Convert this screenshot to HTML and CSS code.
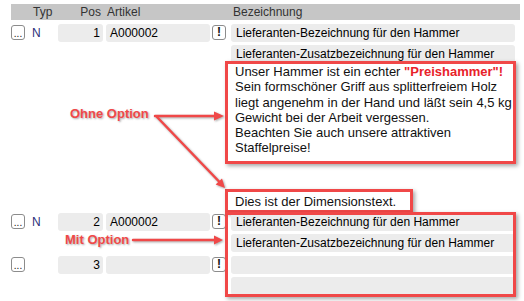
FILE: index.html
```html
<!DOCTYPE html>
<html lang="de">
<head>
    <meta charset="UTF-8">
    <title>Positionen</title>
    <link rel="stylesheet" href="styles.css">
</head>
<body>
    <div class="page">
        <div class="head">
            <span></span>
            <span class="typ">Typ</span>
            <span class="pos">Pos</span>
            <span class="art">Artikel</span>
            <span></span>
            <span class="bez-title">Bezeichnung</span>
        </div>

        <div class="row">
            <div class="btn dots">...</div>
            <div class="typ n">N</div>
            <div class="field num">1</div>
            <div class="field art-field">A000002</div>
            <div class="btn excl">!</div>
            <div class="bez">
                <div class="field">Lieferanten-Bezeichnung für den Hammer</div>
                <div class="field">Lieferanten-Zusatzbezeichnung für den Hammer</div>
                <div class="note">
                    Unser Hammer ist ein echter <b class="hot">"Preishammer"!</b><br>
                    Sein formschöner Griff aus splitterfreiem Holz<br>
                    liegt angenehm in der Hand und läßt sein 4,5 kg<br>
                    Gewicht bei der Arbeit vergessen.<br>
                    Beachten Sie auch unsere attraktiven<br>
                    Staffelpreise!
                </div>
                <div class="dim">Dies ist der Dimensionstext.</div>
            </div>
        </div>

        <div class="marked">
            <div class="row">
                <div class="btn dots">...</div>
                <div class="typ n">N</div>
                <div class="field num">2</div>
                <div class="field art-field">A000002</div>
                <div class="btn excl">!</div>
                <div class="bez">
                    <div class="field">Lieferanten-Bezeichnung für den Hammer</div>
                    <div class="field">Lieferanten-Zusatzbezeichnung für den Hammer</div>
                </div>
            </div>
            <div class="row">
                <div class="btn dots">...</div>
                <div class="typ"></div>
                <div class="field num">3</div>
                <div class="field art-field"></div>
                <div class="btn excl">!</div>
                <div class="bez">
                    <div class="field"></div>
                    <div class="field"></div>
                </div>
            </div>
            <div class="frame"></div>
        </div>
    </div>

    <!-- annotations -->
    <div class="label label-ohne">Ohne Option</div>
    <div class="label label-mit">Mit Option</div>
    <svg class="arrows" width="524" height="301" viewBox="0 0 524 301">
        <g stroke="#f04848" stroke-width="2.5" fill="none" stroke-linecap="round">
            <path d="M155 116 H216"/>
            <path d="M157 117 L219 181.5"/>
            <path d="M133 240 H216"/>
        </g>
        <g fill="#f04848">
            <polygon points="224,116 214,111.5 214,120.5"/>
            <polygon points="225,188 215.6,184.6 222,178.4"/>
            <polygon points="223,240 214,235.5 214,244.5"/>
        </g>
    </svg>
</body>
</html>
```

FILE: styles.css
```css
* {
    margin: 0;
    padding: 0;
    box-sizing: border-box;
}

body {
    position: relative;
    width: 524px;
    height: 301px;
    overflow: hidden;
    background: #fff;
    color: #111;
    font-family: "Liberation Sans", Arial, sans-serif;
    font-size: 12px;
    line-height: 15px;
}

.page {
    padding: 4px 0 0 11px;
}

/* table header */
.head {
    display: grid;
    grid-template-columns: 14px 33px 48px 106px 19px 1fr;
    width: 509px;
    height: 16px;
    margin-bottom: 4px;
    background: #c6c6c6;
    color: #333;
    line-height: 17px;
}

.head .typ {
    padding-left: 8px;
}

.head .pos {
    width: 45px;
    padding-right: 2px;
    text-align: right;
}

.head .art {
    padding-left: 1px;
}

.head .bez-title {
    padding-left: 2px;
}

/* rows */
.row {
    display: grid;
    grid-template-columns: 14px 33px 48px 106px 19px 284px;
    align-items: start;
}

.btn {
    height: 15px;
    margin-top: 1px;
    border: 1px solid #8c8c8c;
    border-radius: 3px;
    background: #fff;
    text-align: center;
    color: #111;
}

.dots {
    font-size: 10px;
    line-height: 15px;
}

.excl {
    width: 14px;
    font-weight: bold;
    font-size: 12px;
    line-height: 13px;
}

.typ.n {
    padding-left: 7px;
    line-height: 18px;
    color: #2c2f7a;
}

.field {
    height: 18px;
    padding: 0 5px;
    background: #ececec;
    border-radius: 3px;
    color: #000;
    line-height: 18px;
    white-space: nowrap;
    overflow: hidden;
}

.num {
    width: 45px;
    padding-right: 3px;
    text-align: right;
}

.art-field {
    width: 104px;
    padding-left: 4px;
}

.bez {
    display: flex;
    flex-direction: column;
    gap: 3px;
}

/* long text, marked red */
.note {
    position: relative;
    height: 103px;
    margin: -5px -1px 0 -6px;
    padding: 0 4px 0 7px;
    border: 3px solid #f04848;
    background: #fff;
    font-size: 13px;
    line-height: 15.3px;
    white-space: nowrap;
    box-shadow: 2px 2px 4px rgba(0, 0, 0, 0.35);
}

.hot {
    color: #e8222a;
}

.dim {
    width: 188px;
    height: 24px;
    margin: 22px 0 0 -6px;
    padding: 2px 7px 0;
    border: 3px solid #f04848;
    background: #fff;
    font-size: 13px;
    white-space: nowrap;
    box-shadow: 2px 2px 4px rgba(0, 0, 0, 0.35);
}

.marked {
    position: relative;
    display: flex;
    flex-direction: column;
    gap: 4px;
}

.frame {
    position: absolute;
    left: 214px;
    top: -1px;
    width: 291px;
    height: 85px;
    border: 3px solid #f04848;
    box-shadow: 2px 2px 4px rgba(0, 0, 0, 0.35);
}

/* annotation labels and arrows */
.label {
    position: absolute;
    color: #f04848;
    font-weight: bold;
    font-size: 13px;
    text-shadow: 1px 1px 2px rgba(0, 0, 0, 0.35);
}

.label-ohne {
    left: 70px;
    top: 106px;
}

.label-mit {
    left: 65px;
    top: 232px;
}

.arrows {
    position: absolute;
    top: 0;
    left: 0;
    pointer-events: none;
    filter: drop-shadow(1px 1px 1px rgba(0, 0, 0, 0.35));
}
```
